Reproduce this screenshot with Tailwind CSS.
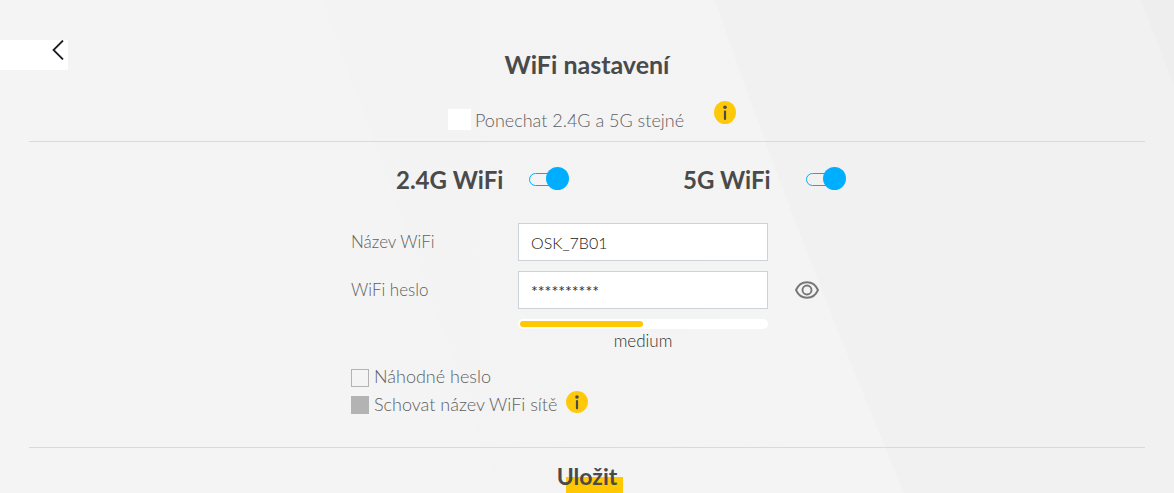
<!DOCTYPE html>
<html lang="cs">
<head>
<meta charset="utf-8">
<meta name="viewport" content="width=device-width, initial-scale=1">
<title>WiFi nastavení</title>
<script src="https://cdn.jsdelivr.net/npm/@tailwindcss/browser@4"></script>
</head>
<body class="relative isolate min-h-screen overflow-x-hidden bg-[#f4f4f4] font-['Century_Gothic','Lato',sans-serif] text-[17px] font-light text-[#606060]">
<!-- Soft curved background bands -->
<svg class="absolute inset-0 -z-10 h-full w-full" viewBox="0 0 1174 493" preserveAspectRatio="none" aria-hidden="true">
  <defs>
    <linearGradient id="band" gradientUnits="userSpaceOnUse" x1="322" y1="0" x2="800" y2="0"><stop offset="0" stop-color="#f3f3f3"/><stop offset="1" stop-color="#f4f4f4"/></linearGradient>
  </defs>
  <path d="M322 0Q400 210 500 493H1174V0Z" fill="url(#band)"/>
  <path d="M715 0Q790 220 904 493H1174V0Z" fill="#f1f1f1"/>
  <path d="M1141 0L1174 85V0Z" fill="#eeeeee"/>
</svg>
<header class="grid min-h-[90px] grid-cols-[1fr_auto_1fr] items-start pt-10">
  <button type="button" aria-label="Zpět" class="flex h-[30px] w-[68px] items-start justify-end bg-white pr-1">
    <svg width="12" height="20" viewBox="0 0 12 20" fill="none" stroke="#1c1c24" stroke-width="1.800"><path d="M11 .5L1.500 10L11 19.500"/></svg>
  </button>
  <h1 class="text-[25px]/[48px] font-bold text-[#4a4a4a]">WiFi nastavení</h1>
</header>
<main class="mx-[29px]">
  <div class="flex h-[52px] items-start justify-center border-b border-[#dadada] pl-[10px]">
    <label class="flex items-start gap-1 pt-[19px] text-lg/[22px]">
      <input type="checkbox" class="h-[21px] w-[23px] appearance-none bg-white">
      <span class="w-[239px]">Ponechat 2.4G a 5G stejné</span>
    </label>
    <button type="button" aria-label="Informace o sloučení sítí" class="mt-[11px]">
      <svg width="22" height="23" viewBox="0 0 22 23"><ellipse cx="11" cy="11.500" rx="11" ry="11.500" fill="#ffc90b"/><circle cx="11" cy="6.300" r="1.800" fill="#4a4a4a"/><rect x="9.900" y="9.500" width="2.200" height="9.600" rx="1.100" fill="#4a4a4a"/></svg>
    </button>
  </div>
  <section class="mx-auto max-w-[544px] pt-6">
    <div class="flex min-h-[30px] items-start pl-[81px] text-2xl/[28px] font-bold text-[#4a4a4a]">
      <label for="w24" class="w-[133px]">2.4G WiFi</label>
      <input id="w24" type="checkbox" role="switch" checked class="relative mt-px h-[23px] w-10 appearance-none before:absolute before:left-0 before:top-[6px] before:h-[13px] before:w-8 before:rounded-full before:border before:border-[#00aeff] before:content-[''] after:absolute after:right-0 after:top-0 after:size-[23px] after:rounded-full after:bg-[#00aeff] after:content-['']">
      <label for="w5" class="ml-[114px] w-[123px]">5G WiFi</label>
      <input id="w5" type="checkbox" role="switch" checked class="relative mt-px h-[23px] w-10 appearance-none before:absolute before:left-0 before:top-[6px] before:h-[13px] before:w-8 before:rounded-full before:border before:border-[#00aeff] before:content-[''] after:absolute after:right-0 after:top-0 after:size-[23px] after:rounded-full after:bg-[#00aeff] after:content-['']">
    </div>
    <div class="mt-[27px] grid grid-cols-[167px_250px_auto] items-center gap-y-[10px] pl-9">
      <label for="ssid">Název WiFi</label>
      <input id="ssid" type="text" value="OSK_7B01" class="h-[38px] border border-[#cdd1d8] bg-white px-3 text-base font-light text-[#202020]">
      <span></span>
      <label for="pwd">WiFi heslo</label>
      <input id="pwd" type="text" value="**********" class="h-[38px] border border-[#cdd1d8] bg-white px-3 text-base font-normal text-[#303030]">
      <button type="button" aria-label="Zobrazit heslo" class="ml-[27px] w-6">
        <svg width="24" height="18" viewBox="0 0 24 18" fill="none" stroke="#777" stroke-width="1.900"><path d="M1 9C3.200 4 7.300 1.200 12 1.200S20.800 4 23 9C20.800 14 16.700 16.800 12 16.800S3.200 14 1 9Z"/><circle cx="12" cy="9" r="4.500"/></svg>
      </button>
      <div class="col-start-2">
        <div class="h-[10px] rounded-full bg-white p-[2px]"><div class="h-[6px] w-1/2 rounded-full bg-[#ffc800]"></div></div>
        <p class="text-center text-[17px]/6 text-[#303030]">medium</p>
      </div>
    </div>
    <div class="mt-3 flex flex-col gap-1 pl-9 text-lg/[22px]">
      <label class="flex h-6 items-start gap-[5px]">
        <input type="checkbox" class="mt-1 size-[18px] appearance-none border border-[#b3b3b3]">
        Náhodné heslo
      </label>
      <div class="flex h-6 items-start">
        <label class="flex h-6 w-[215px] items-start gap-[5px] whitespace-nowrap">
          <input type="checkbox" disabled class="mt-[3px] size-[18px] appearance-none bg-[#b3b3b3]">
          Schovat název WiFi sítě
        </label>
        <button type="button" aria-label="Informace o skrytí sítě" class="-mt-0.5">
          <svg class="block" width="22" height="22" viewBox="0 0 22 22"><circle cx="11" cy="11" r="11" fill="#ffc90b"/><circle cx="11" cy="6" r="1.800" fill="#4a4a4a"/><rect x="9.900" y="9" width="2.200" height="9.400" rx="1.100" fill="#4a4a4a"/></svg>
        </button>
      </div>
    </div>
  </section>
  <div class="mt-[30px] flex justify-center border-t border-[#dadada] pl-[6px] pt-[13px]">
    <button type="button" class="flex h-8 items-start bg-[linear-gradient(#ffc800,#ffc800)] bg-[length:57px_16px] bg-right-bottom bg-no-repeat pr-[6px] text-[23px]/[30px] font-bold text-[#4a4a4a]">Uložit</button>
  </div>
</main>
</body>
</html>
